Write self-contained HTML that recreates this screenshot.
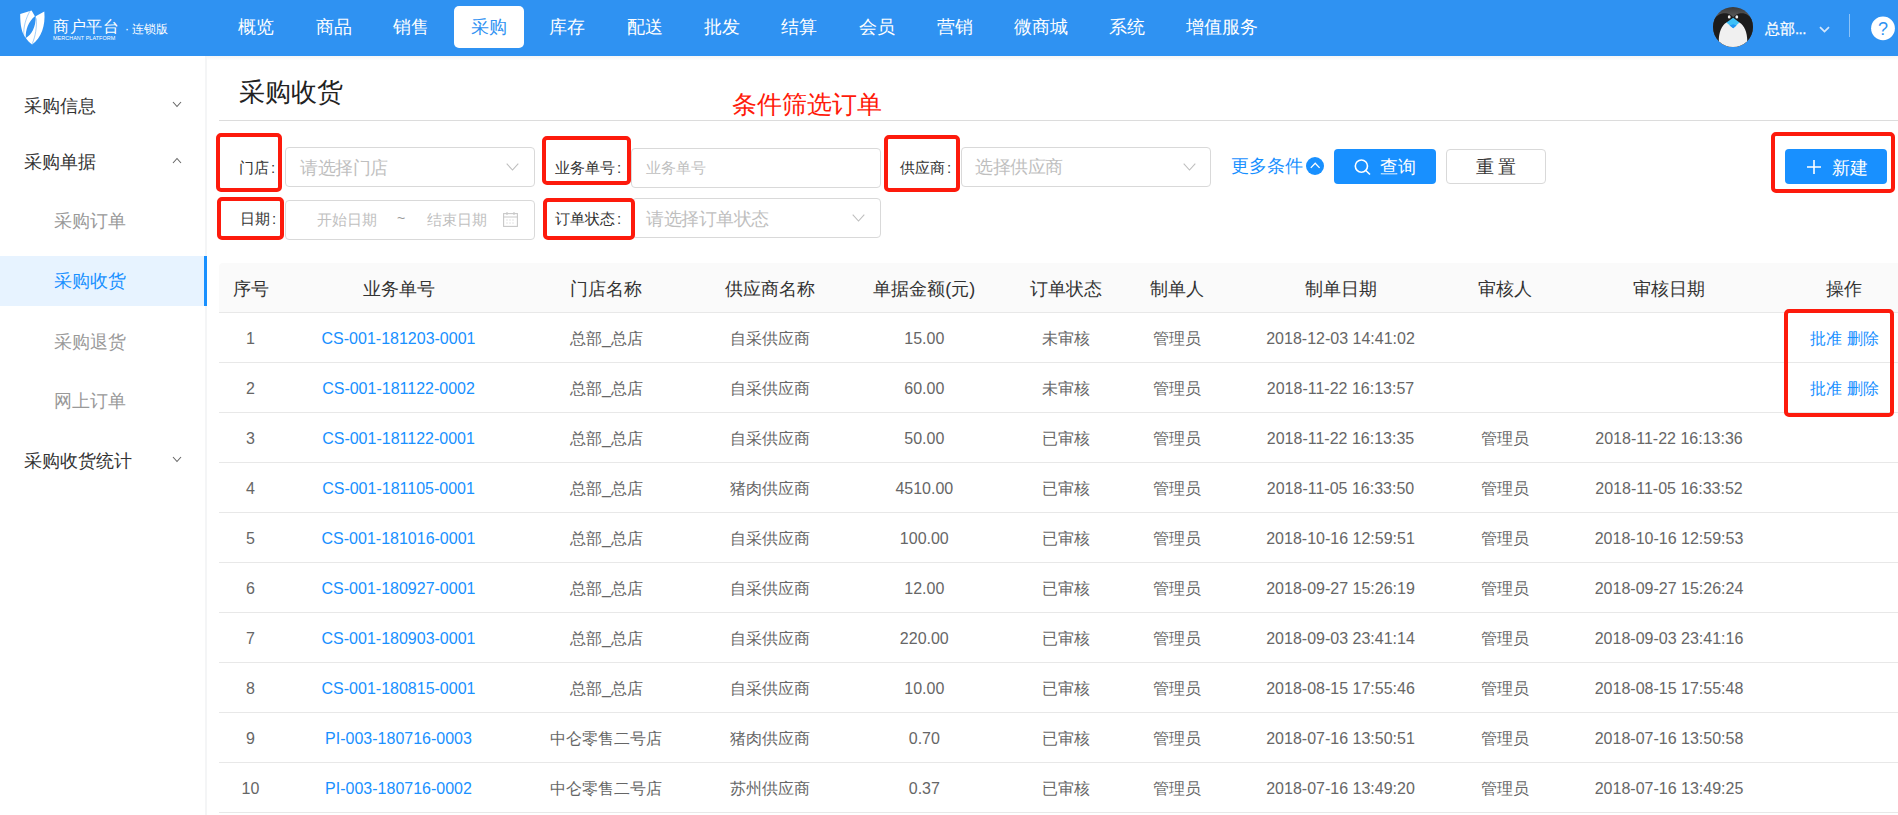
<!DOCTYPE html>
<html><head><meta charset="utf-8">
<style>
*{margin:0;padding:0;box-sizing:border-box}
html,body{width:1898px;height:815px;overflow:hidden;background:#f4f5f6;font-family:"Liberation Sans",sans-serif;position:relative}
.abs{position:absolute;white-space:nowrap}
#hdr{position:absolute;left:0;top:0;width:1898px;height:56px;background:#2f92f2}
.nav{position:absolute;top:6px;height:42px;line-height:43px;font-size:18px;color:#fff;text-align:center}
.nav.on{background:#fff;color:#2f92f2;border-radius:5px}
#side{position:absolute;left:0;top:56px;width:205px;height:759px;background:#fff}
.si{position:absolute;left:0;width:205px;height:50px;line-height:50px;font-size:18px;color:#333;white-space:nowrap}
.si.sub{color:#999;padding-left:54px}
.si.top{padding-left:24px}
.si.on{background:#e7f3ff;color:#1890ff}
#panel{position:absolute;left:207px;top:56px;width:1691px;height:759px;background:linear-gradient(#f6f6f6 0px,#f8f8f8 1.5px,#fdfdfd 3.5px,#fff 4.5px)}
.lbl{position:absolute;font-size:15px;color:#333;white-space:nowrap}
.lbl i{font-style:normal;margin-left:2px}
.inp{position:absolute;height:40px;border:1px solid #d9d9d9;border-radius:4px;background:#fff}
.ph{position:absolute;color:#bfbfbf;white-space:nowrap}
.red{position:absolute;border:4px solid #fd1a0c;border-radius:5px}
.btn{position:absolute;height:35px;border-radius:4px;font-size:18px;white-space:nowrap}
.th{position:absolute;font-size:18px;color:#333;white-space:nowrap;transform:translateX(-50%)}
.td{position:absolute;font-size:16px;color:#666;white-space:nowrap;transform:translateX(-50%)}
.lk{color:#1890ff}
.hl{position:absolute;left:219px;width:1679px;height:1px;background:#e8e8e8}
</style></head><body>
<div id="hdr">
  <!-- logo -->
  <svg class="abs" style="left:0;top:0" width="50" height="50" viewBox="0 0 50 50">
    <path d="M20.2 14.1 L31.6 10.5 L34.9 16.3 C28.5 21.5 25.3 30 25.8 38.1 C21.8 33 20.1 25.5 20.2 14.1 Z" fill="#fff"/>
    <path d="M35.7 16.3 L44.3 11.4 C45.6 25.5 41.5 37.5 32.1 44.5 C29.5 42.6 27.4 40.6 25.8 38.1 C31.8 34.5 35.8 27.5 35.7 16.3 Z" fill="#fff"/>
    <path d="M29.9 11.2 C26 18 23.2 27 23.8 35.9" fill="none" stroke="#2f92f2" stroke-width="0.45"/>
    <path d="M36.2 18.3 C37 27 35.5 36 32.2 43.8" fill="none" stroke="#2f92f2" stroke-width="0.45"/>
  </svg>
  <div class="abs" style="left:53px;top:17px;font-size:16px;color:#fff;letter-spacing:0.6px">商户平台</div>
  <div class="abs" style="left:53px;top:35px;font-size:5.45px;color:#fff;letter-spacing:0.05px">MERCHANT PLATFORM</div>
  <div class="abs" style="left:125px;top:21px;font-size:12px;color:#fff">· 连锁版</div>
  <div class="nav" style="left:221px;width:70px">概览</div>
  <div class="nav" style="left:299px;width:70px">商品</div>
  <div class="nav" style="left:376px;width:70px">销售</div>
  <div class="nav on" style="left:454px;width:70px">采购</div>
  <div class="nav" style="left:532px;width:70px">库存</div>
  <div class="nav" style="left:610px;width:70px">配送</div>
  <div class="nav" style="left:687px;width:70px">批发</div>
  <div class="nav" style="left:764px;width:70px">结算</div>
  <div class="nav" style="left:842px;width:70px">会员</div>
  <div class="nav" style="left:920px;width:70px">营销</div>
  <div class="nav" style="left:997px;width:88px">微商城</div>
  <div class="nav" style="left:1092px;width:70px">系统</div>
  <div class="nav" style="left:1169px;width:106px">增值服务</div>
<svg class="abs" style="left:1713px;top:7px" width="40" height="40" viewBox="0 0 40 40">
 <defs><clipPath id="cc"><circle cx="20" cy="20" r="20"/></clipPath>
 <linearGradient id="gg" x1="0" y1="0" x2="0" y2="1"><stop offset="0" stop-color="#3a3a3a"/><stop offset="0.3" stop-color="#606060"/><stop offset="1" stop-color="#444"/></linearGradient></defs>
 <g clip-path="url(#cc)">
  <rect width="40" height="40" fill="url(#gg)"/>
  <path d="M-1 40 L-1 16 C2 8 9 5 14.5 6.5 C17.5 7.5 19.2 9 20.2 10.2 C21.2 9 23 7.5 26 6.5 C31.5 5 38 8 41 16 L41 40 Z" fill="#1c1c1c"/>
  <path d="M13.4 15.6 C8.5 18.5 5.8 26 5.8 34 L5.5 41 L34.8 41 L34.3 34 C34.3 26 31.5 18.5 26.4 15.6 Z" fill="#f0f0f0"/>
  <path d="M13.4 15.6 L20.2 10.8 L26.4 15.6 L20.2 21.3 Z" fill="#3ec0f7"/>
  <path d="M16.5 18.5 L20.2 21.3 L23.6 18.5 L20.2 17.2 Z" fill="#2196f3"/>
  <ellipse cx="16.2" cy="9.9" rx="1.4" ry="1.6" fill="#eee"/>
  <ellipse cx="23.8" cy="9.9" rx="1.4" ry="1.6" fill="#eee"/>
 </g>
</svg>
<div class="abs" style="left:1765px;top:20px;font-size:15px;color:#fff;-webkit-text-stroke:0.25px #fff">总部<span style="letter-spacing:-0.6px">...</span></div>
<svg class="abs" style="left:1819px;top:26px" width="11" height="7" viewBox="0 0 11 7"><path d="M1 1.2 L5.5 5.6 L10 1.2" fill="none" stroke="#d2e6fb" stroke-width="1.8"/></svg>
<div class="abs" style="left:1849px;top:14px;width:1px;height:23px;background:rgba(255,255,255,0.45)"></div>
<svg class="abs" style="left:1871px;top:16px" width="24" height="25" viewBox="0 0 24 25"><circle cx="12" cy="12.3" r="11.9" fill="#fff"/><text x="12.1" y="19" font-size="18" text-anchor="middle" fill="#2f92f2" font-family="Liberation Sans" style="font-weight:300">?</text></svg>

</div>
<div id="side">
  <div class="si top" style="top:25px">采购信息</div>
  <svg class="abs" style="left:172px;top:45px" width="10" height="7" viewBox="0 0 10 7"><path d="M1 1 L5 5.5 L9 1" fill="none" stroke="#666" stroke-width="1.1"/></svg>
  <div class="si top" style="top:81px">采购单据</div>
  <svg class="abs" style="left:172px;top:101px" width="10" height="7" viewBox="0 0 10 7"><path d="M1 6 L5 1.5 L9 6" fill="none" stroke="#666" stroke-width="1.1"/></svg>
  <div class="si sub" style="top:140px">采购订单</div>
  <div class="si sub on" style="top:200px">采购收货</div>
  <div class="abs" style="left:204px;top:200px;width:3px;height:50px;background:#1890ff"></div>
  <div class="si sub" style="top:261px">采购退货</div>
  <div class="si sub" style="top:320px">网上订单</div>
  <div class="si top" style="top:380px">采购收货统计</div>
  <svg class="abs" style="left:172px;top:400px" width="10" height="7" viewBox="0 0 10 7"><path d="M1 1 L5 5.5 L9 1" fill="none" stroke="#666" stroke-width="1.1"/></svg>
</div>
<div id="panel"></div>
<div class="abs" style="left:239px;top:75px;font-size:26px;color:#222">采购收货</div>
<div class="abs" style="left:219px;top:120px;width:1679px;height:1px;background:#dcdcdc"></div>
<div class="abs" style="left:732px;top:88px;font-size:25px;color:#ff1a0a">条件筛选订单</div>

<div class="lbl" style="left:239px;top:159px">门店<i>:</i></div>
<div class="inp" style="left:285px;top:147px;width:250px"></div>
<div class="ph" style="left:300px;top:156px;font-size:18px;letter-spacing:-0.5px">请选择门店</div>
<svg class="abs" style="left:506px;top:163px" width="13" height="8" viewBox="0 0 13 8"><path d="M0.7 0.7 L6.5 7 L12.3 0.7" fill="none" stroke="#bfbfbf" stroke-width="1.1"/></svg>
<div class="lbl" style="left:555px;top:159px">业务单号<i>:</i></div>
<div class="inp" style="left:631px;top:148px;width:250px"></div>
<div class="ph" style="left:646px;top:159px;font-size:15px">业务单号</div>

<div class="lbl" style="left:900px;top:159px">供应商<i>:</i></div>
<div class="inp" style="left:961px;top:147px;width:250px"></div>
<div class="ph" style="left:975px;top:155px;font-size:18px;letter-spacing:-0.5px">选择供应商</div>
<svg class="abs" style="left:1183px;top:163px" width="13" height="8" viewBox="0 0 13 8"><path d="M0.7 0.7 L6.5 7 L12.3 0.7" fill="none" stroke="#bfbfbf" stroke-width="1.1"/></svg>
<div class="abs" style="left:1231px;top:154px;font-size:18px;color:#1890ff">更多条件</div>
<svg class="abs" style="left:1306px;top:157px" width="18" height="18" viewBox="0 0 18 18"><circle cx="9" cy="9" r="9" fill="#1890ff"/><path d="M4.8 10.9 L9.2 6.3 L13.6 10.9" fill="none" stroke="#fff" stroke-width="1.3"/></svg>
<div class="btn" style="left:1334px;top:149px;width:102px;background:#1890ff;color:#fff"></div>
<svg class="abs" style="left:1354px;top:158px" width="18" height="18" viewBox="0 0 18 18"><circle cx="7.4" cy="8.1" r="6.1" fill="none" stroke="#fff" stroke-width="1.6"/><path d="M11.8 12.5 L16 16.5" stroke="#fff" stroke-width="1.6"/></svg>
<div class="abs" style="left:1380px;top:155px;font-size:18px;color:#fff">查询</div>
<div class="btn" style="left:1446px;top:149px;width:100px;border:1px solid #d9d9d9;background:#fff"></div>
<div class="abs" style="left:1476px;top:155px;font-size:18px;color:#333;letter-spacing:4px">重置</div>

<div class="btn" style="left:1785px;top:149px;width:102px;background:#1890ff"></div>
<svg class="abs" style="left:1807px;top:160px" width="14" height="14" viewBox="0 0 14 14"><path d="M7 0 V14 M0 7 H14" stroke="#fff" stroke-width="1.6"/></svg>
<div class="abs" style="left:1832px;top:156px;font-size:18px;color:#fff">新建</div>

<div class="lbl" style="left:240px;top:210px">日期<i>:</i></div>
<div class="inp" style="left:285px;top:200px;width:250px"></div>
<div class="ph" style="left:317px;top:211px;font-size:15px">开始日期</div>
<div class="ph" style="left:397px;top:210px;font-size:14px;color:#999">~</div>
<div class="ph" style="left:427px;top:211px;font-size:15px">结束日期</div>
<svg class="abs" style="left:503px;top:212px" width="15" height="15" viewBox="0 0 15 15"><rect x="0.6" y="1.6" width="13.8" height="12.8" fill="none" stroke="#c8c8c8" stroke-width="1.1"/><path d="M0.6 5 H14.4 M4 0 V3 M11 0 V3" stroke="#c8c8c8" stroke-width="1.1"/><path d="M3.5 8 h1 M6.5 8 h1 M9.5 8 h1 M3.5 11 h1 M6.5 11 h1 M9.5 11 h1" stroke="#c8c8c8" stroke-width="1"/></svg>

<div class="lbl" style="left:555px;top:210px">订单状态<i>:</i></div>
<div class="inp" style="left:632px;top:198px;width:249px"></div>
<div class="ph" style="left:646px;top:207px;font-size:18px;letter-spacing:-0.5px">请选择订单状态</div>
<svg class="abs" style="left:852px;top:214px" width="13" height="8" viewBox="0 0 13 8"><path d="M0.7 0.7 L6.5 7 L12.3 0.7" fill="none" stroke="#bfbfbf" stroke-width="1.1"/></svg>

<div class="abs" style="left:219px;top:263px;width:1679px;height:49px;background:#fafafa;border-radius:4px 0 0 0"></div>
<div class="th" style="left:250.5px;top:277px">序号</div>
<div class="th" style="left:398.5px;top:277px">业务单号</div>
<div class="th" style="left:606.4px;top:277px">门店名称</div>
<div class="th" style="left:770px;top:277px">供应商名称</div>
<div class="th" style="left:924.3px;top:277px">单据金额(元)</div>
<div class="th" style="left:1066px;top:277px">订单状态</div>
<div class="th" style="left:1176.5px;top:277px">制单人</div>
<div class="th" style="left:1340.5px;top:277px">制单日期</div>
<div class="th" style="left:1505px;top:277px">审核人</div>
<div class="th" style="left:1669px;top:277px">审核日期</div>
<div class="th" style="left:1844.4px;top:277px">操作</div>
<div class="hl" style="top:312px"></div>
<div class="td" style="left:250.5px;top:330px">1</div>
<div class="td lk" style="left:398.5px;top:330px">CS-001-181203-0001</div>
<div class="td" style="left:606.4px;top:329px">总部_总店</div>
<div class="td" style="left:770px;top:329px">自采供应商</div>
<div class="td" style="left:924.3px;top:330px">15.00</div>
<div class="td" style="left:1066px;top:329px">未审核</div>
<div class="td" style="left:1176.5px;top:329px">管理员</div>
<div class="td" style="left:1340.5px;top:330px">2018-12-03 14:41:02</div>
<div class="td lk" style="left:1844.4px;top:329px">批准 删除</div>
<div class="hl" style="top:362px"></div>
<div class="td" style="left:250.5px;top:380px">2</div>
<div class="td lk" style="left:398.5px;top:380px">CS-001-181122-0002</div>
<div class="td" style="left:606.4px;top:379px">总部_总店</div>
<div class="td" style="left:770px;top:379px">自采供应商</div>
<div class="td" style="left:924.3px;top:380px">60.00</div>
<div class="td" style="left:1066px;top:379px">未审核</div>
<div class="td" style="left:1176.5px;top:379px">管理员</div>
<div class="td" style="left:1340.5px;top:380px">2018-11-22 16:13:57</div>
<div class="td lk" style="left:1844.4px;top:379px">批准 删除</div>
<div class="hl" style="top:412px"></div>
<div class="td" style="left:250.5px;top:430px">3</div>
<div class="td lk" style="left:398.5px;top:430px">CS-001-181122-0001</div>
<div class="td" style="left:606.4px;top:429px">总部_总店</div>
<div class="td" style="left:770px;top:429px">自采供应商</div>
<div class="td" style="left:924.3px;top:430px">50.00</div>
<div class="td" style="left:1066px;top:429px">已审核</div>
<div class="td" style="left:1176.5px;top:429px">管理员</div>
<div class="td" style="left:1340.5px;top:430px">2018-11-22 16:13:35</div>
<div class="td" style="left:1505px;top:429px">管理员</div>
<div class="td" style="left:1669px;top:430px">2018-11-22 16:13:36</div>
<div class="hl" style="top:462px"></div>
<div class="td" style="left:250.5px;top:480px">4</div>
<div class="td lk" style="left:398.5px;top:480px">CS-001-181105-0001</div>
<div class="td" style="left:606.4px;top:479px">总部_总店</div>
<div class="td" style="left:770px;top:479px">猪肉供应商</div>
<div class="td" style="left:924.3px;top:480px">4510.00</div>
<div class="td" style="left:1066px;top:479px">已审核</div>
<div class="td" style="left:1176.5px;top:479px">管理员</div>
<div class="td" style="left:1340.5px;top:480px">2018-11-05 16:33:50</div>
<div class="td" style="left:1505px;top:479px">管理员</div>
<div class="td" style="left:1669px;top:480px">2018-11-05 16:33:52</div>
<div class="hl" style="top:512px"></div>
<div class="td" style="left:250.5px;top:530px">5</div>
<div class="td lk" style="left:398.5px;top:530px">CS-001-181016-0001</div>
<div class="td" style="left:606.4px;top:529px">总部_总店</div>
<div class="td" style="left:770px;top:529px">自采供应商</div>
<div class="td" style="left:924.3px;top:530px">100.00</div>
<div class="td" style="left:1066px;top:529px">已审核</div>
<div class="td" style="left:1176.5px;top:529px">管理员</div>
<div class="td" style="left:1340.5px;top:530px">2018-10-16 12:59:51</div>
<div class="td" style="left:1505px;top:529px">管理员</div>
<div class="td" style="left:1669px;top:530px">2018-10-16 12:59:53</div>
<div class="hl" style="top:562px"></div>
<div class="td" style="left:250.5px;top:580px">6</div>
<div class="td lk" style="left:398.5px;top:580px">CS-001-180927-0001</div>
<div class="td" style="left:606.4px;top:579px">总部_总店</div>
<div class="td" style="left:770px;top:579px">自采供应商</div>
<div class="td" style="left:924.3px;top:580px">12.00</div>
<div class="td" style="left:1066px;top:579px">已审核</div>
<div class="td" style="left:1176.5px;top:579px">管理员</div>
<div class="td" style="left:1340.5px;top:580px">2018-09-27 15:26:19</div>
<div class="td" style="left:1505px;top:579px">管理员</div>
<div class="td" style="left:1669px;top:580px">2018-09-27 15:26:24</div>
<div class="hl" style="top:612px"></div>
<div class="td" style="left:250.5px;top:630px">7</div>
<div class="td lk" style="left:398.5px;top:630px">CS-001-180903-0001</div>
<div class="td" style="left:606.4px;top:629px">总部_总店</div>
<div class="td" style="left:770px;top:629px">自采供应商</div>
<div class="td" style="left:924.3px;top:630px">220.00</div>
<div class="td" style="left:1066px;top:629px">已审核</div>
<div class="td" style="left:1176.5px;top:629px">管理员</div>
<div class="td" style="left:1340.5px;top:630px">2018-09-03 23:41:14</div>
<div class="td" style="left:1505px;top:629px">管理员</div>
<div class="td" style="left:1669px;top:630px">2018-09-03 23:41:16</div>
<div class="hl" style="top:662px"></div>
<div class="td" style="left:250.5px;top:680px">8</div>
<div class="td lk" style="left:398.5px;top:680px">CS-001-180815-0001</div>
<div class="td" style="left:606.4px;top:679px">总部_总店</div>
<div class="td" style="left:770px;top:679px">自采供应商</div>
<div class="td" style="left:924.3px;top:680px">10.00</div>
<div class="td" style="left:1066px;top:679px">已审核</div>
<div class="td" style="left:1176.5px;top:679px">管理员</div>
<div class="td" style="left:1340.5px;top:680px">2018-08-15 17:55:46</div>
<div class="td" style="left:1505px;top:679px">管理员</div>
<div class="td" style="left:1669px;top:680px">2018-08-15 17:55:48</div>
<div class="hl" style="top:712px"></div>
<div class="td" style="left:250.5px;top:730px">9</div>
<div class="td lk" style="left:398.5px;top:730px">PI-003-180716-0003</div>
<div class="td" style="left:606.4px;top:729px">中仑零售二号店</div>
<div class="td" style="left:770px;top:729px">猪肉供应商</div>
<div class="td" style="left:924.3px;top:730px">0.70</div>
<div class="td" style="left:1066px;top:729px">已审核</div>
<div class="td" style="left:1176.5px;top:729px">管理员</div>
<div class="td" style="left:1340.5px;top:730px">2018-07-16 13:50:51</div>
<div class="td" style="left:1505px;top:729px">管理员</div>
<div class="td" style="left:1669px;top:730px">2018-07-16 13:50:58</div>
<div class="hl" style="top:762px"></div>
<div class="td" style="left:250.5px;top:780px">10</div>
<div class="td lk" style="left:398.5px;top:780px">PI-003-180716-0002</div>
<div class="td" style="left:606.4px;top:779px">中仑零售二号店</div>
<div class="td" style="left:770px;top:779px">苏州供应商</div>
<div class="td" style="left:924.3px;top:780px">0.37</div>
<div class="td" style="left:1066px;top:779px">已审核</div>
<div class="td" style="left:1176.5px;top:779px">管理员</div>
<div class="td" style="left:1340.5px;top:780px">2018-07-16 13:49:20</div>
<div class="td" style="left:1505px;top:779px">管理员</div>
<div class="td" style="left:1669px;top:780px">2018-07-16 13:49:25</div>
<div class="hl" style="top:812px"></div>
<div class="red" style="left:216px;top:133px;width:66px;height:59px"></div>
<div class="red" style="left:217px;top:197px;width:67px;height:43px"></div>
<div class="red" style="left:542px;top:136px;width:89px;height:49px"></div>
<div class="red" style="left:543px;top:198px;width:92px;height:42px"></div>
<div class="red" style="left:884px;top:135px;width:76px;height:57px"></div>
<div class="red" style="left:1771px;top:132px;width:124px;height:61px"></div>
<div class="red" style="left:1784px;top:309px;width:110px;height:108px"></div>
</body></html>
